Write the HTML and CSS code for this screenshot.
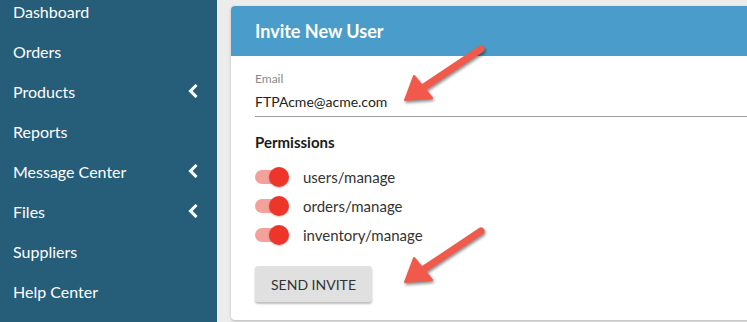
FILE: index.html
```html
<!DOCTYPE html>
<html>
<head>
<meta charset="utf-8">
<link rel="stylesheet" href="styles.css">
</head>
<body>
<div class="app">
  <nav class="sidebar">
    <ul class="nav">
      <li class="nav-item">Dashboard</li>
      <li class="nav-item">Orders</li>
      <li class="nav-item">Products<svg class="chev" viewBox="0 0 10 14"><polyline points="7.5,2 2.5,7 7.5,12"/></svg></li>
      <li class="nav-item">Reports</li>
      <li class="nav-item">Message Center<svg class="chev" viewBox="0 0 10 14"><polyline points="7.5,2 2.5,7 7.5,12"/></svg></li>
      <li class="nav-item">Files<svg class="chev" viewBox="0 0 10 14"><polyline points="7.5,2 2.5,7 7.5,12"/></svg></li>
      <li class="nav-item">Suppliers</li>
      <li class="nav-item">Help Center</li>
    </ul>
  </nav>
  <main class="main">
    <section class="card">
      <header class="card-header">Invite New User</header>
      <div class="card-body">
        <div class="field">
          <label class="field-label">Email</label>
          <div class="field-input">FTPAcme@acme.com</div>
        </div>
        <h3 class="section-title">Permissions</h3>
        <ul class="perms">
          <li class="perm"><span class="toggle"><span class="track"></span><span class="thumb"></span></span><span class="perm-label">users/manage</span></li>
          <li class="perm"><span class="toggle"><span class="track"></span><span class="thumb"></span></span><span class="perm-label">orders/manage</span></li>
          <li class="perm"><span class="toggle"><span class="track"></span><span class="thumb"></span></span><span class="perm-label">inventory/manage</span></li>
        </ul>
        <button class="btn">SEND INVITE</button>
      </div>
    </section>
  </main>
  <svg class="arrows" viewBox="0 0 747 322" width="747" height="322">
    <g class="arrow">
      <line x1="481" y1="49" x2="421" y2="89"/>
      <polygon points="405,100 432,98 414,76"/>
    </g>
    <g class="arrow">
      <line x1="481" y1="231" x2="421" y2="271"/>
      <polygon points="405,282 432,280 414,258"/>
    </g>
  </svg>
</div>
</body>
</html>
```
FILE: styles.css
```css
* { box-sizing: border-box; }
html, body { margin: 0; padding: 0; }
body {
  font-family: Lato, "Open Sans", sans-serif;
  width: 747px;
  height: 322px;
  overflow: hidden;
  background: #ececec;
}
.app {
  position: relative;
  display: flex;
  width: 747px;
  height: 322px;
  overflow: hidden;
}
.sidebar {
  width: 217px;
  flex: 0 0 217px;
  background: #265d78;
  color: #fff;
}
.nav {
  list-style: none;
  margin: -9px 0 0 0;
  padding: 0;
}
.nav-item {
  display: flex;
  align-items: center;
  justify-content: space-between;
  height: 40px;
  padding: 0 19px 0 13px;
  font-size: 16px;
}
.chev {
  width: 10px;
  height: 14px;
}
.chev polyline {
  fill: none;
  stroke: #fff;
  stroke-width: 3;
  stroke-linecap: square;
}
.main {
  flex: 1;
  padding: 6px 0 0 14px;
  overflow: hidden;
}
.card {
  width: 560px;
  height: 314px;
  background: #fff;
  border-radius: 4px;
  box-shadow: 0 1px 3px rgba(0,0,0,0.22);
  overflow: hidden;
}
.card-header {
  height: 50px;
  line-height: 50px;
  background: #4a9dca;
  color: #fff;
  font-weight: 700;
  font-size: 18px;
  padding-left: 24px;
}
.card-body {
  padding: 16px 24px 0 24px;
}
.field-label {
  display: block;
  font-size: 12px;
  line-height: 14px;
  color: #8a8a8a;
}
.field-input {
  margin-top: 6px;
  font-size: 14px;
  line-height: 20px;
  color: #222;
  padding-bottom: 4px;
  border-bottom: 1px solid #9e9e9e;
}
.section-title {
  margin: 15px 0 0 0;
  font-size: 15px;
  line-height: 20px;
  font-weight: 700;
  color: #1a1a1a;
}
.perms {
  list-style: none;
  margin: 10px 0 0 0;
  padding: 0;
}
.perm {
  display: flex;
  align-items: center;
  height: 29px;
  gap: 14px;
}
.toggle {
  position: relative;
  width: 34px;
  height: 20px;
  display: block;
}
.track {
  position: absolute;
  left: 0;
  top: 3px;
  width: 30px;
  height: 14px;
  border-radius: 7px;
  background: #f4a19c;
}
.thumb {
  position: absolute;
  right: 0;
  top: 0;
  width: 20px;
  height: 20px;
  border-radius: 50%;
  background: #ee3529;
  box-shadow: 0 1px 2px rgba(0,0,0,0.25);
}
.perm-label {
  font-size: 15px;
  color: #333;
}
.btn {
  margin-top: 17px;
  width: 117px;
  height: 36px;
  border: none;
  border-radius: 3px;
  background: #e0e0e0;
  color: #333;
  font-family: Lato, "Open Sans", sans-serif;
  font-size: 14px;
  box-shadow: 0 2px 2px rgba(0,0,0,0.25);
  padding: 0;
}
.arrows {
  position: absolute;
  left: 0;
  top: 0;
  pointer-events: none;
  filter: drop-shadow(1px 2px 1.5px rgba(0,0,0,0.45));
}
.arrow line {
  stroke: #f15a4b;
  stroke-width: 7;
  stroke-linecap: round;
}
.arrow polygon {
  fill: #f15a4b;
  stroke: #f15a4b;
  stroke-width: 2;
  stroke-linejoin: round;
}
```
